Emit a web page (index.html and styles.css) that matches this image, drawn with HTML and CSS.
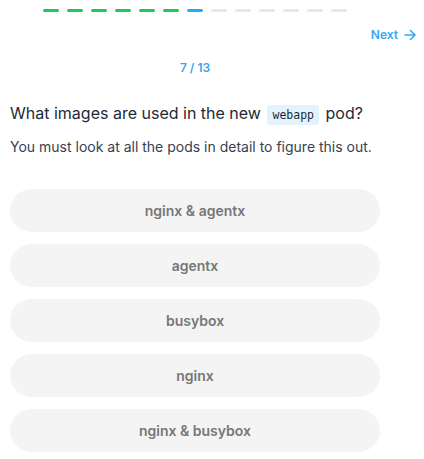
FILE: index.html
```html
<!DOCTYPE html>
<html lang="en">
<head>
    <meta charset="UTF-8">
    <meta name="viewport" content="width=device-width, initial-scale=1.0">
    <title>Quiz</title>
    <link rel="stylesheet" href="styles.css">
</head>
<body>
    <div class="progress">
        <span class="step done"></span>
        <span class="step done"></span>
        <span class="step done"></span>
        <span class="step done"></span>
        <span class="step done"></span>
        <span class="step done"></span>
        <span class="step current"></span>
        <span class="step"></span>
        <span class="step"></span>
        <span class="step"></span>
        <span class="step"></span>
        <span class="step"></span>
        <span class="step"></span>
    </div>

    <div class="nav">
        <a class="next-link" href="#">Next
            <svg width="12" height="12" viewBox="0 0 12 12" fill="none" stroke="currentColor" stroke-width="1.6" stroke-linecap="round" stroke-linejoin="round">
                <path d="M1 6h10M6.5 1.5L11 6l-4.5 4.5"/>
            </svg>
        </a>
    </div>

    <div class="quiz">
        <p class="counter">7 / 13</p>
        <h2 class="question">What images are used in the new <code>webapp</code> pod?</h2>
        <p class="hint">You must look at all the pods in detail to figure this out.</p>

        <div class="options">
            <button class="option">nginx &amp; agentx</button>
            <button class="option">agentx</button>
            <button class="option">busybox</button>
            <button class="option">nginx</button>
            <button class="option">nginx &amp; busybox</button>
        </div>
    </div>
</body>
</html>
```

FILE: styles.css
```css
body {
    font-family: Inter, "Noto Sans", sans-serif;
    background-color: #fff;
    margin: 0;
    color: #1f2937;
}

.progress {
    display: flex;
    gap: 8px;
    padding: 9px 0 0 43px;
}

.progress .step {
    width: 16px;
    height: 3px;
    border-radius: 2px;
    background-color: #e8e8e8;
}

.progress .step.done {
    background-color: #22c55e;
}

.progress .step.current {
    background-color: #29aaf5;
}

.nav {
    display: flex;
    justify-content: flex-end;
    padding: 15px 8px 0 0;
}

.next-link {
    display: flex;
    align-items: center;
    gap: 6px;
    color: #38a8f5;
    font-size: 12px;
    font-weight: 600;
    text-decoration: none;
}

.quiz {
    width: 370px;
    padding: 0 10px;
}

.counter {
    margin: 18px 0 0;
    text-align: center;
    color: #3ea2f2;
    font-size: 12px;
    font-weight: 600;
}

.question {
    margin: 26px 0 0;
    font-size: 16px;
    font-weight: 400;
    line-height: 24px;
    color: #1f2937;
}

.question code {
    font-family: "DejaVu Sans Mono", monospace;
    font-size: 11.5px;
    background-color: #e2f3fd;
    padding: 3px 5px;
    border-radius: 3px;
    margin: 0 2px;
}

.hint {
    margin: 10px 0 0;
    font-size: 14px;
    line-height: 20px;
    color: #374151;
}

.options {
    display: flex;
    flex-direction: column;
    gap: 12px;
    margin-top: 32px;
}

.option {
    height: 43px;
    border: none;
    border-radius: 22px;
    background-color: #f4f4f4;
    color: #777;
    font-family: inherit;
    font-size: 14px;
    font-weight: 600;
    cursor: pointer;
}

.option:hover {
    background-color: #ececec;
}
```
